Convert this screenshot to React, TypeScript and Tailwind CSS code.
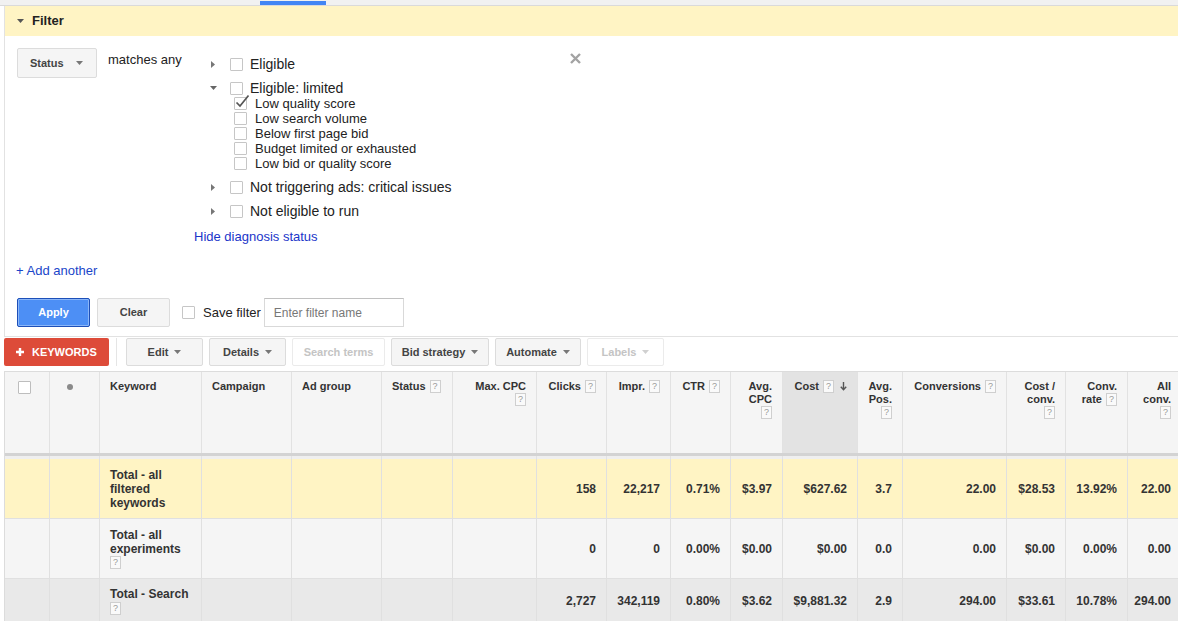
import React from "react";

const W = [
  "w-[45px]",
  "w-[50px]",
  "w-[102px]",
  "w-[90px]",
  "w-[90px]",
  "w-[71px]",
  "w-[84px]",
  "w-[70px]",
  "w-[64px]",
  "w-[60px]",
  "w-[52px]",
  "w-[75px]",
  "w-[45px]",
  "w-[104px]",
  "w-[59px]",
  "w-[62px]",
  "w-[54px]",
];

function DownTri({ c = "#777" }: { c?: string }) {
  return (
    <svg width="7" height="4" viewBox="0 0 7 4" className="shrink-0">
      <path d="M0 0H7L3.5 4Z" fill={c} />
    </svg>
  );
}

function RightTri() {
  return (
    <svg width="4" height="7" viewBox="0 0 4 7" className="shrink-0">
      <path d="M0 0V7L4 3.5Z" fill="#777" />
    </svg>
  );
}

function Help() {
  return (
    <span className="inline-flex items-center justify-center w-[11px] h-[13px] border border-[#cfcfcf] bg-[#fafafa] text-[9px] font-normal text-[#999] leading-none shrink-0">
      ?
    </span>
  );
}

function Checkbox({ checked = false }: { checked?: boolean }) {
  return (
    <span className="relative inline-block w-[13px] h-[13px] border border-[#c6c6c6] bg-white rounded-[1px] shrink-0">
      {checked && (
        <svg
          className="absolute left-[0px] top-[-4px]"
          width="15"
          height="15"
          viewBox="0 0 15 15"
        >
          <path d="M1.5 8.5L5 12L13.5 1.5" stroke="#555" strokeWidth="1.7" fill="none" />
        </svg>
      )}
    </span>
  );
}

function TopRow({ label, expanded }: { label: string; expanded?: boolean }) {
  return (
    <div className="h-[24px] flex items-center pl-[16px]">
      <div className={`w-[20px] flex items-center ${expanded ? "pl-0" : "pl-[1px]"}`}>
        {expanded ? <DownTri c="#666" /> : <RightTri />}
      </div>
      <Checkbox />
      <span className="ml-[7px] text-[14px] leading-[16px]">{label}</span>
    </div>
  );
}

function ToolBtn({
  label,
  w,
  disabled,
  arrow = true,
}: {
  label: string;
  w: string;
  disabled?: boolean;
  arrow?: boolean;
}) {
  return (
    <div
      className={`${w} h-[28px] flex items-center justify-center gap-[6px] rounded-[2px] border text-[11px] font-bold ${
        disabled
          ? "bg-white border-[#ebebeb] text-[#c4c4c4]"
          : "bg-[#f5f5f5] border-[#dcdcdc] text-[#444]"
      }`}
    >
      <span>{label}</span>
      {arrow && <DownTri c={disabled ? "#d0d0d0" : "#777"} />}
    </div>
  );
}

type HLine = { text?: string; help?: boolean; arrow?: boolean };

const headers: { lines: HLine[]; right?: boolean; bg?: string }[] = [
  { lines: [] },
  { lines: [] },
  { lines: [{ text: "Keyword" }] },
  { lines: [{ text: "Campaign" }] },
  { lines: [{ text: "Ad group" }] },
  { lines: [{ text: "Status", help: true }] },
  { lines: [{ text: "Max. CPC" }, { help: true }], right: true },
  { lines: [{ text: "Clicks", help: true }], right: true },
  { lines: [{ text: "Impr.", help: true }], right: true },
  { lines: [{ text: "CTR", help: true }], right: true },
  { lines: [{ text: "Avg." }, { text: "CPC" }, { help: true }], right: true },
  { lines: [{ text: "Cost", help: true, arrow: true }], right: true, bg: "bg-[#e3e3e3]" },
  { lines: [{ text: "Avg." }, { text: "Pos." }, { help: true }], right: true },
  { lines: [{ text: "Conversions", help: true }], right: true },
  { lines: [{ text: "Cost /" }, { text: "conv." }, { help: true }], right: true },
  { lines: [{ text: "Conv." }, { text: "rate", help: true }], right: true },
  { lines: [{ text: "All" }, { text: "conv." }, { help: true }], right: true },
];

const rows: {
  bg: string;
  h: string;
  kw: string[];
  kwHelp?: boolean;
  nums: string[];
}[] = [
  {
    bg: "bg-[#fff4c4]",
    h: "h-[60px]",
    kw: ["Total - all", "filtered", "keywords"],
    nums: ["158", "22,217", "0.71%", "$3.97", "$627.62", "3.7", "22.00", "$28.53", "13.92%", "22.00"],
  },
  {
    bg: "bg-[#f5f5f5]",
    h: "h-[60px]",
    kw: ["Total - all", "experiments"],
    kwHelp: true,
    nums: ["0", "0", "0.00%", "$0.00", "$0.00", "0.0", "0.00", "$0.00", "0.00%", "0.00"],
  },
  {
    bg: "bg-[#e9e9e9]",
    h: "h-[45px]",
    kw: ["Total - Search"],
    kwHelp: true,
    nums: ["2,727", "342,119", "0.80%", "$3.62", "$9,881.32", "2.9", "294.00", "$33.61", "10.78%", "294.00"],
  },
];

export default function App() {
  return (
    <div className="w-[1178px] h-[621px] overflow-hidden bg-white font-['Liberation_Sans',Arial,sans-serif] text-[#222]">
      {/* top strip */}
      <div className="h-[5px] bg-[#f1f1f1] pt-[1px]">
        <div className="ml-[260px] w-[66px] h-[4px] bg-[#4285f4]" />
      </div>
      <div className="h-[1px] bg-[#dadada]" />

      {/* filter panel */}
      <div className="ml-[4px] border-l border-b border-[#e2e2e2]">
        <div className="h-[30px] bg-[#fff4c4] flex items-center pl-[12px]">
          <DownTri c="#555" />
          <span className="ml-[8px] text-[13px] font-bold text-[#222]">Filter</span>
        </div>

        <div className="flex pl-[12px] pt-[12px]">
          <div className="w-[80px] h-[30px] shrink-0 flex items-center justify-between pl-[12px] pr-[13px] bg-[#f5f5f5] border border-[#dcdcdc] rounded-[2px] text-[11px] font-bold text-[#444]">
            <span>Status</span>
            <DownTri c="#777" />
          </div>
          <div className="ml-[11px] w-[86px] shrink-0 pt-[4px] text-[13px] leading-[16px] text-[#222]">
            matches any
          </div>
          <div className="w-[376px] shrink-0 pt-[4px] text-[#222]">
            <TopRow label="Eligible" />
            <TopRow label="Eligible: limited" expanded />
            <div className="-mt-[4px] pl-[40px]">
              {[
                ["Low quality score", true],
                ["Low search volume", false],
                ["Below first page bid", false],
                ["Budget limited or exhausted", false],
                ["Low bid or quality score", false],
              ].map(([s, c]) => (
                <div key={s as string} className="h-[15px] flex items-center">
                  <Checkbox checked={c as boolean} />
                  <span className="ml-[8px] text-[13px] leading-[15px]">{s as string}</span>
                </div>
              ))}
            </div>
            <div className="mt-[4px]">
              <TopRow label="Not triggering ads: critical issues" />
              <TopRow label="Not eligible to run" />
            </div>
            <div className="mt-[2px] h-[24px] flex items-center text-[13px] text-[#1a35c9]">
              Hide diagnosis status
            </div>
          </div>
          <div className="mt-[5px] shrink-0">
            <svg width="11" height="11" viewBox="0 0 11 11">
              <path d="M1 1L10 10M10 1L1 10" stroke="#a3a3a3" strokeWidth="2.4" />
            </svg>
          </div>
        </div>

        <div className="pl-[11px] mt-[14px] text-[13px] leading-[16px] text-[#1a46c9]">
          + Add another
        </div>

        <div className="mt-[19px] pb-[9px] pl-[12px] flex items-center">
          <div className="w-[73px] h-[29px] flex items-center justify-center rounded-[2px] border border-[#1d4fb8] bg-[#4d8ff5] shadow-[inset_0_0_0_1px_rgba(255,255,255,0.35)] text-white text-[11px] font-bold">
            Apply
          </div>
          <div className="ml-[7px] w-[73px] h-[29px] flex items-center justify-center rounded-[2px] border border-[#dcdcdc] bg-[#f5f5f5] text-[#444] text-[11px] font-bold">
            Clear
          </div>
          <div className="ml-[12px] flex items-center">
            <Checkbox />
          </div>
          <span className="ml-[8px] text-[13px] text-[#222]">Save filter</span>
          <div className="ml-[3px] w-[140px] h-[29px] flex items-center pl-[9px] border border-[#d9d9d9] border-t-[#c0c0c0] bg-white text-[12px] text-[#777]">
            Enter filter name
          </div>
        </div>
      </div>

      {/* toolbar */}
      <div className="mt-[1px] pl-[4px] h-[28px] flex items-center">
        <div className="w-[105px] h-[28px] flex items-center pl-[12px] bg-[#dd4b39] rounded-[2px] text-white text-[11px] font-bold">
          <svg width="8" height="8" viewBox="0 0 8 8">
            <path d="M4 0V8M0 4H8" stroke="#fff" strokeWidth="2.4" />
          </svg>
          <span className="ml-[8px]">KEYWORDS</span>
        </div>
        <div className="ml-[7px] w-[1px] h-[28px] bg-[#e5e5e5]" />
        <div className="ml-[9px] flex items-center gap-[6px]">
          <ToolBtn label="Edit" w="w-[77px]" />
          <ToolBtn label="Details" w="w-[77px]" />
          <ToolBtn label="Search terms" w="w-[93px]" disabled arrow={false} />
          <ToolBtn label="Bid strategy" w="w-[98px]" />
          <ToolBtn label="Automate" w="w-[86px]" />
          <ToolBtn label="Labels" w="w-[77px]" disabled />
        </div>
      </div>

      {/* table */}
      <div className="mt-[5px] ml-[4px] w-[1200px] border-l border-t border-[#dcdcdc]">
        {/* header */}
        <div className="flex bg-[#f5f5f5]">
          {headers.map((h, i) => (
            <div
              key={i}
              className={`${W[i]} shrink-0 h-[81px] border-r border-[#e2e2e2] text-[11px] leading-[13px] font-bold text-[#333] ${
                h.bg ?? ""
              } ${h.right ? "pr-[10px] pt-[8px] flex flex-col items-end" : "pl-[10px] pt-[8px]"}`}
            >
              {i === 0 && (
                <div className="pt-[1px] pl-[3px]">
                  <span className="inline-block w-[13px] h-[13px] border border-[#bdbdbd] bg-white rounded-[1px]" />
                </div>
              )}
              {i === 1 && (
                <div className="pt-[4px] pl-[7px]">
                  <span className="block w-[6px] h-[6px] rounded-full bg-[#8a8a8a]" />
                </div>
              )}
              {h.lines.map((l, j) => (
                <div key={j} className="h-[13px] flex items-center gap-[4px]">
                  {l.text && <span className="whitespace-nowrap">{l.text}</span>}
                  {l.help && <Help />}
                  {l.arrow && (
                    <svg width="7" height="9" viewBox="0 0 7 9" className="ml-[2px]">
                      <path d="M3.5 0V7.5M0.8 4.8L3.5 7.8L6.2 4.8" stroke="#555" strokeWidth="1.4" fill="none" />
                    </svg>
                  )}
                </div>
              ))}
            </div>
          ))}
        </div>
        {/* header divider */}
        <div className="h-[3px] bg-[#d3d3d3]" />
        <div className="flex h-[3px] bg-[#efefef]">
          {W.map((w, i) => (
            <div key={i} className={`${w} shrink-0 h-[3px] border-r border-[#e2e2e2]`} />
          ))}
        </div>

        {/* body rows */}
        {rows.map((r, ri) => (
          <div key={ri} className={`flex ${r.bg}`}>
            {W.map((w, i) => {
              let content: React.ReactNode = null;
              let cls = "";
              if (i === 2) {
                cls = "pl-[10px] flex flex-col justify-center";
                content = (
                  <>
                    {r.kw.map((k) => (
                      <div key={k} className="h-[14px] leading-[14px] whitespace-nowrap">
                        {k}
                      </div>
                    ))}
                    {r.kwHelp && (
                      <div className="h-[14px] flex items-center">
                        <Help />
                      </div>
                    )}
                  </>
                );
              } else if (i >= 7) {
                cls = "pr-[10px] flex items-center justify-end";
                content = r.nums[i - 7];
              }
              return (
                <div
                  key={i}
                  className={`${w} ${r.h} shrink-0 border-r border-b border-[#e0e0e0] text-[12px] font-bold text-[#333] ${cls}`}
                >
                  {content}
                </div>
              );
            })}
          </div>
        ))}
      </div>
    </div>
  );
}
